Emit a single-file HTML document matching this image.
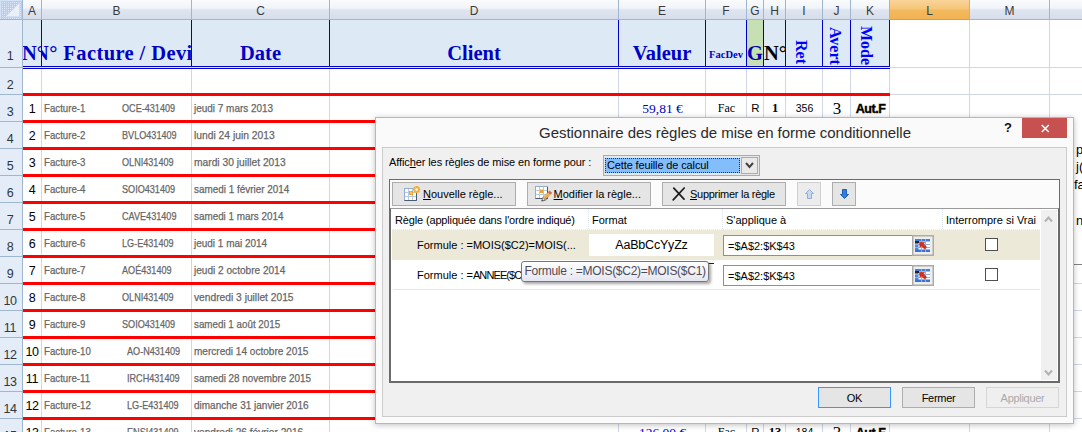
<!DOCTYPE html>
<html lang="fr"><head><meta charset="utf-8"><title>Gestionnaire des règles de mise en forme conditionnelle</title>
<style>
html,body{margin:0;padding:0;background:#fff;}
body{width:1082px;height:432px;overflow:hidden;position:relative;font-family:"Liberation Sans",sans-serif;}
#sheet{position:absolute;left:0;top:0;width:1082px;height:432px;overflow:hidden;background:#fff;}
.abs,.ch,.rh,.gv,.gh,.red,.t,.n,.nar,.hc,.bl{position:absolute;}
.ch{top:0;height:19px;border-bottom:1px solid #9eb6ce;border-right:1px solid #9eb6ce;background:linear-gradient(#f9fbfd 0%,#f1f4f9 42%,#dfe5f0 52%,#d7deeb 100%);color:#3b3b3b;font-size:12px;line-height:22px;text-align:center;box-sizing:content-box;}
.ch.sel{background:linear-gradient(#f9d49a 0%,#f6c67a 45%,#f3b95e 55%,#f2b352 100%);border-bottom-color:#f29536;border-right-color:#f2a84a;color:#3b3b3b;}
.rh{left:0;width:22px;border-right:1px solid #9eb6ce;border-bottom:1px solid #9eb6ce;background:#e4ecf7;color:#2c3744;font-size:12.5px;letter-spacing:-0.35px;text-align:center;}
.rh span{position:absolute;left:-2px;right:0;bottom:1px;line-height:15px;}
.gv{top:20px;width:1px;height:412px;background:#d0d7e5;}
.gh{left:23px;height:1px;width:1059px;background:#d0d7e5;}
.red{left:23px;width:867px;height:3px;background:#fe0000;}
.n{font-size:12.5px;color:#000;text-align:center;left:23px;width:18px;line-height:15px;letter-spacing:-0.35px;}
.nar{font-size:11px;color:#666;white-space:nowrap;transform-origin:0 0;transform:scaleX(0.88);line-height:13px;-webkit-text-stroke:0.25px #666;}
.nar.nc{transform:scaleX(0.827);}
.nar.nd{transform:scaleX(0.905);}
.hc{top:20px;height:46px;background:#dde9f5;overflow:hidden;}
.bl{background:#0000c8;}
.ht{position:absolute;white-space:nowrap;font-family:"Liberation Serif",serif;font-weight:bold;color:#0000c8;}
.t{white-space:nowrap;}
/* dialog */
#dlg{position:absolute;left:375px;top:117px;width:697px;height:305px;border:1px solid #b3b3b3;background:#f4f4f4;box-shadow:0 0 5px rgba(0,0,0,0.18);font-size:11px;color:#000;}
#client{position:absolute;left:6px;top:29px;width:684px;height:269px;background:#f0f0f0;border:1px solid #dcdcdc;box-sizing:border-box;}
.btn{position:absolute;box-sizing:border-box;border:1px solid #adadad;background:#e5e5e5;height:24px;top:182px;font-size:11px;white-space:nowrap;}
.btn span.l{position:absolute;top:4px;line-height:14px;}
.fld{position:absolute;left:723px;width:211px;height:21px;box-sizing:border-box;border:1px solid #8f8f8f;background:#fff;}
.fld span{position:absolute;left:4px;top:3px;font-size:11px;line-height:14px;}
.cb{position:absolute;left:985px;width:13px;height:13px;box-sizing:border-box;border:1px solid #4f4f4f;background:#fff;}
.d{position:absolute;}
</style></head><body>
<div id="sheet">

<div class="abs" style="left:23px;top:20px;width:866px;height:47px;background:#dde9f5"></div>
<div class="abs" style="left:747px;top:20px;width:16px;height:47px;background:#c6e0b4"></div>
<div class="gv" style="left:41px"></div>
<div class="gv" style="left:191px"></div>
<div class="gv" style="left:329px"></div>
<div class="gv" style="left:618px"></div>
<div class="gv" style="left:705px"></div>
<div class="gv" style="left:746px"></div>
<div class="gv" style="left:763px"></div>
<div class="gv" style="left:785px"></div>
<div class="gv" style="left:822px"></div>
<div class="gv" style="left:850px"></div>
<div class="gv" style="left:889px"></div>
<div class="gv" style="left:969px"></div>
<div class="gv" style="left:1049px"></div>
<div class="gv" style="left:1130px"></div>
<div class="gh" style="top:67px"></div>
<div class="gh" style="top:94px"></div>
<div class="gh" style="top:121px"></div>
<div class="gh" style="top:148px"></div>
<div class="gh" style="top:175px"></div>
<div class="gh" style="top:202px"></div>
<div class="gh" style="top:229px"></div>
<div class="gh" style="top:256px"></div>
<div class="gh" style="top:283px"></div>
<div class="gh" style="top:310px"></div>
<div class="gh" style="top:337px"></div>
<div class="gh" style="top:364px"></div>
<div class="gh" style="top:391px"></div>
<div class="gh" style="top:418px"></div>
<div class="gh" style="top:445px"></div>
<div class="abs" style="left:1074px;top:117px;width:8px;height:147px;background:#fff;border-bottom:1px solid #808080"></div>
<div class="ch" style="left:0;width:22px;background:#b9d1f3"><svg width="22" height="19" style="position:absolute;left:0;top:0"><defs><pattern id="dots" width="2" height="2" patternUnits="userSpaceOnUse"><rect width="2" height="2" fill="#b4cef4"/><rect width="1" height="1" fill="#dbe7f9"/></pattern></defs><rect x="0" y="0" width="22" height="19" fill="url(#dots)"/><path d="M0.5 19 V0.5 H22" fill="none" stroke="#d3e2f8"/><path d="M19 3.5 L19 16.5 L6 16.5 Z" fill="#e9f0fa"/><path d="M19.5 3 L19.5 17 L5 17" fill="none" stroke="#c9dbf5" stroke-width="1"/></svg></div>
<div class="ch" style="left:23px;width:18px">A</div>
<div class="ch" style="left:42px;width:149px">B</div>
<div class="ch" style="left:192px;width:137px">C</div>
<div class="ch" style="left:330px;width:288px">D</div>
<div class="ch" style="left:619px;width:86px">E</div>
<div class="ch" style="left:706px;width:40px">F</div>
<div class="ch" style="left:747px;width:16px">G</div>
<div class="ch" style="left:764px;width:21px">H</div>
<div class="ch" style="left:786px;width:36px">I</div>
<div class="ch" style="left:823px;width:27px">J</div>
<div class="ch" style="left:851px;width:38px">K</div>
<div class="ch sel" style="left:890px;width:79px">L</div>
<div class="ch" style="left:970px;width:79px">M</div>
<div class="ch" style="left:1050px;width:80px">N</div>
<div class="rh" style="top:20px;height:47px"><span style="bottom:3px">1</span></div>
<div class="rh" style="top:68px;height:26px"><span>2</span></div>
<div class="rh" style="top:95px;height:26px"><span>3</span></div>
<div class="rh" style="top:122px;height:26px"><span>4</span></div>
<div class="rh" style="top:149px;height:26px"><span>5</span></div>
<div class="rh" style="top:176px;height:26px"><span>6</span></div>
<div class="rh" style="top:203px;height:26px"><span>7</span></div>
<div class="rh" style="top:230px;height:26px"><span>8</span></div>
<div class="rh" style="top:257px;height:26px"><span>9</span></div>
<div class="rh" style="top:284px;height:26px"><span>10</span></div>
<div class="rh" style="top:311px;height:26px"><span>11</span></div>
<div class="rh" style="top:338px;height:26px"><span>12</span></div>
<div class="rh" style="top:365px;height:26px"><span>13</span></div>
<div class="rh" style="top:392px;height:26px"><span>14</span></div>
<div class="rh" style="top:419px;height:26px"><span>15</span></div>
<div class="rh" style="top:446px;height:26px"><span>15</span></div>
<div class="bl" style="left:41px;top:20px;width:1px;height:47px"></div>
<div class="bl" style="left:191px;top:20px;width:1px;height:47px"></div>
<div class="bl" style="left:329px;top:20px;width:1px;height:47px"></div>
<div class="bl" style="left:618px;top:20px;width:1px;height:47px"></div>
<div class="bl" style="left:705px;top:20px;width:1px;height:47px"></div>
<div class="bl" style="left:746px;top:20px;width:1px;height:47px"></div>
<div class="bl" style="left:763px;top:20px;width:1px;height:47px"></div>
<div class="bl" style="left:785px;top:20px;width:1px;height:47px"></div>
<div class="bl" style="left:822px;top:20px;width:1px;height:47px"></div>
<div class="bl" style="left:850px;top:20px;width:1px;height:47px"></div>
<div class="bl" style="left:889px;top:20px;width:1px;height:47px"></div>
<div class="bl" style="left:23px;top:66px;width:867px;height:1px"></div>
<div class="bl" style="left:23px;top:68px;width:867px;height:1px"></div>
<div class="abs" style="left:23px;top:67px;width:867px;height:1px;background:#dde9f5"></div>
<div class="abs" style="left:23px;top:20px;width:18px;height:46px;overflow:hidden"><span class="ht" style="font-size:20.5px;left:-1px;top:21px;line-height:24px">N°</span></div>
<div class="abs" style="left:42px;top:20px;width:149px;height:46px;overflow:hidden"><span class="ht" style="font-size:20.5px;left:-8px;top:21px;line-height:24px;letter-spacing:0.4px">N° Facture / Devis</span></div>
<div class="abs" style="left:192px;top:20px;width:137px;height:46px;overflow:hidden"><span class="ht" style="font-size:20.5px;left:0;width:137px;text-align:center;top:21px;line-height:24px">Date</span></div>
<div class="abs" style="left:330px;top:20px;width:288px;height:46px;overflow:hidden"><span class="ht" style="font-size:20.5px;left:0;width:288px;text-align:center;top:21px;line-height:24px">Client</span></div>
<div class="abs" style="left:619px;top:20px;width:86px;height:46px;overflow:hidden"><span class="ht" style="font-size:20.5px;left:0;width:86px;text-align:center;top:21px;line-height:24px">Valeur</span></div>
<div class="abs" style="left:706px;top:20px;width:40px;height:46px;overflow:hidden"><span class="ht" style="font-size:10.5px;left:0;width:40px;text-align:center;top:29px;line-height:12px">FacDev</span></div>
<div class="abs" style="left:747px;top:20px;width:16px;height:46px;overflow:hidden"><span class="ht" style="font-size:20.5px;left:0;width:16px;text-align:center;top:21px;line-height:24px;color:#0000b0">G</span></div>
<div class="abs" style="left:764px;top:20px;width:21px;height:46px;overflow:hidden"><span class="ht" style="font-size:20.5px;left:0px;top:21px;line-height:24px;color:#000">N°</span></div>
<div class="abs" style="left:786px;top:20px;width:36px;height:46px;overflow:hidden"><span class="ht" style="color:#0000ff;font-size:16px;line-height:16px;left:14.5px;top:20px;transform-origin:0 0;transform:rotate(90deg) translateY(-50%)">Ret</span></div>
<div class="abs" style="left:823px;top:20px;width:27px;height:46px;overflow:hidden"><span class="ht" style="color:#0000ff;font-size:16px;line-height:16px;left:11.5px;top:7.399999999999999px;transform-origin:0 0;transform:rotate(90deg) translateY(-50%)">Avert</span></div>
<div class="abs" style="left:851px;top:20px;width:38px;height:46px;overflow:hidden"><span class="ht" style="color:#0000ff;font-size:16px;line-height:16px;left:15.299999999999955px;top:6px;transform-origin:0 0;transform:rotate(90deg) translateY(-50%)">Mode</span></div>
<div class="red" style="top:93px"></div>
<div class="red" style="top:120px"></div>
<div class="red" style="top:147px"></div>
<div class="red" style="top:174px"></div>
<div class="red" style="top:201px"></div>
<div class="red" style="top:228px"></div>
<div class="red" style="top:255px"></div>
<div class="red" style="top:282px"></div>
<div class="red" style="top:309px"></div>
<div class="red" style="top:336px"></div>
<div class="red" style="top:363px"></div>
<div class="red" style="top:390px"></div>
<div class="red" style="top:417px"></div>
<div class="n" style="top:102px">1</div>
<div class="nar" style="left:44px;top:102px">Facture-1</div>
<div class="nar nc" style="left:122px;top:102px">OCE-431409</div>
<div class="nar" style="left:194px;top:102px;transform:scaleX(0.905)">jeudi 7 mars 2013</div>
<div class="n" style="top:129px">2</div>
<div class="nar" style="left:44px;top:129px">Facture-2</div>
<div class="nar nc" style="left:122px;top:129px">BVLO431409</div>
<div class="nar" style="left:194px;top:129px;transform:scaleX(0.9351)">lundi 24 juin 2013</div>
<div class="n" style="top:156px">3</div>
<div class="nar" style="left:44px;top:156px">Facture-3</div>
<div class="nar nc" style="left:122px;top:156px">OLNI431409</div>
<div class="nar" style="left:194px;top:156px;transform:scaleX(0.9314)">mardi 30 juillet 2013</div>
<div class="n" style="top:183px">4</div>
<div class="nar" style="left:44px;top:183px">Facture-4</div>
<div class="nar nc" style="left:122px;top:183px">SOIO431409</div>
<div class="nar" style="left:194px;top:183px;transform:scaleX(0.9012)">samedi 1 février 2014</div>
<div class="n" style="top:210px">5</div>
<div class="nar" style="left:44px;top:210px">Facture-5</div>
<div class="nar nc" style="left:122px;top:210px">CAVE431409</div>
<div class="nar" style="left:194px;top:210px;transform:scaleX(0.897)">samedi 1 mars 2014</div>
<div class="n" style="top:237px">6</div>
<div class="nar" style="left:44px;top:237px">Facture-6</div>
<div class="nar nc" style="left:122px;top:237px">LG-E431409</div>
<div class="nar" style="left:194px;top:237px;transform:scaleX(0.9062)">jeudi 1 mai 2014</div>
<div class="n" style="top:264px">7</div>
<div class="nar" style="left:44px;top:264px">Facture-7</div>
<div class="nar nc" style="left:122px;top:264px">AOÉ431409</div>
<div class="nar" style="left:194px;top:264px;transform:scaleX(0.916)">jeudi 2 octobre 2014</div>
<div class="n" style="top:291px">8</div>
<div class="nar" style="left:44px;top:291px">Facture-8</div>
<div class="nar nc" style="left:122px;top:291px">OLNI431409</div>
<div class="nar" style="left:194px;top:291px;transform:scaleX(0.9302)">vendredi 3 juillet 2015</div>
<div class="n" style="top:318px">9</div>
<div class="nar" style="left:44px;top:318px">Facture-9</div>
<div class="nar nc" style="left:122px;top:318px">SOIO431409</div>
<div class="nar" style="left:194px;top:318px;transform:scaleX(0.8916)">samedi 1 août 2015</div>
<div class="n" style="top:345px">10</div>
<div class="nar" style="left:44px;top:345px">Facture-10</div>
<div class="nar nc" style="left:127px;top:345px">AO-N431409</div>
<div class="nar" style="left:194px;top:345px;transform:scaleX(0.913)">mercredi 14 octobre 2015</div>
<div class="n" style="top:372px">11</div>
<div class="nar" style="left:44px;top:372px">Facture-11</div>
<div class="nar nc" style="left:127px;top:372px">IRCH431409</div>
<div class="nar" style="left:194px;top:372px;transform:scaleX(0.8973)">samedi 28 novembre 2015</div>
<div class="n" style="top:399px">12</div>
<div class="nar" style="left:44px;top:399px">Facture-12</div>
<div class="nar nc" style="left:127px;top:399px">LG-E431409</div>
<div class="nar" style="left:194px;top:399px;transform:scaleX(0.909)">dimanche 31 janvier 2016</div>
<div class="n" style="top:426px">13</div>
<div class="nar" style="left:44px;top:426px">Facture-13</div>
<div class="nar nc" style="left:127px;top:426px">ENSI431409</div>
<div class="nar" style="left:194px;top:426px;transform:scaleX(0.9202)">vendredi 26 février 2016</div>
<div class="t" style="position:absolute;left:619px;width:87px;text-align:center;top:101px;font-family:'Liberation Serif',serif;font-size:13.5px;line-height:16px;color:#0000c8">59,81 €</div>
<div class="t" style="position:absolute;left:706px;width:41px;text-align:center;top:101px;font-family:'Liberation Serif',serif;font-size:12px;line-height:14px;color:#000">Fac</div>
<div class="t" style="position:absolute;left:747px;width:17px;text-align:center;top:101px;font-size:11.5px;line-height:15px;color:#000">R</div>
<div class="t" style="position:absolute;left:764px;width:22px;text-align:center;top:100.5px;font-family:'Liberation Serif',serif;font-weight:bold;font-size:12.5px;line-height:14px;color:#000">1</div>
<div class="t" style="position:absolute;left:786px;width:37px;text-align:center;top:102px;font-size:10.5px;line-height:13px;color:#000">356</div>
<div class="t" style="position:absolute;left:823px;width:28px;text-align:center;top:98.5px;font-family:'Liberation Serif',serif;font-size:17px;line-height:20px;color:#000">3</div>
<div class="t" style="position:absolute;left:851px;width:39px;text-align:center;top:101.5px;font-weight:bold;font-size:12.5px;line-height:14px;letter-spacing:-0.45px;color:#000;-webkit-text-stroke:0.4px #000">Aut.F</div>
<div class="t" style="position:absolute;left:619px;width:87px;text-align:center;top:425px;font-family:'Liberation Serif',serif;font-size:13.5px;line-height:16px;color:#0000c8">126,00 €</div>
<div class="t" style="position:absolute;left:706px;width:41px;text-align:center;top:425px;font-family:'Liberation Serif',serif;font-size:12px;line-height:14px;color:#000">Fac</div>
<div class="t" style="position:absolute;left:747px;width:17px;text-align:center;top:425px;font-size:11.5px;line-height:15px;color:#000">R</div>
<div class="t" style="position:absolute;left:764px;width:22px;text-align:center;top:424.5px;font-family:'Liberation Serif',serif;font-weight:bold;font-size:12.5px;line-height:14px;color:#000">13</div>
<div class="t" style="position:absolute;left:786px;width:37px;text-align:center;top:426px;font-size:10.5px;line-height:13px;color:#000">184</div>
<div class="t" style="position:absolute;left:823px;width:28px;text-align:center;top:422.5px;font-family:'Liberation Serif',serif;font-size:17px;line-height:20px;color:#000">3</div>
<div class="t" style="position:absolute;left:851px;width:39px;text-align:center;top:425.5px;font-weight:bold;font-size:12.5px;line-height:14px;letter-spacing:-0.45px;color:#000;-webkit-text-stroke:0.4px #000">Aut.F</div>
<div class="t" style="position:absolute;left:1076px;top:141.5px;font-size:13px;line-height:15px;color:#000">p</div>
<div class="t" style="position:absolute;left:1076px;top:158.5px;font-size:13px;line-height:15px;color:#000">j(</div>
<div class="t" style="position:absolute;left:1074px;top:177px;font-size:13px;line-height:15px;color:#000">fa</div>
<div class="t" style="position:absolute;left:1076px;top:213px;font-size:13px;line-height:15px;color:#000">n</div>
</div><!-- dialog -->
<div id="dlgwrap" style="position:absolute;left:0;top:0;width:1082px;height:432px;font-family:'Liberation Sans',sans-serif;">
<div class="d" style="left:375px;top:117px;width:699px;height:307px;box-sizing:border-box;border:1px solid #b7b7b7;background:#fafafa;box-shadow:0 1px 6px rgba(0,0,0,0.25)"></div>
<div class="d" style="left:382px;top:147px;width:685px;height:270px;box-sizing:border-box;border:1px solid #cbcbcb;background:#f0f0f0"></div>
<!-- title -->
<div class="d t" style="left:382px;width:686px;top:123px;text-align:center;font-size:15px;line-height:20px;color:#2b2b2b;letter-spacing:-0.045px" id="title">Gestionnaire des règles de mise en forme conditionnelle</div>
<div class="d t" style="left:1002px;top:119px;width:12px;text-align:center;font-size:13px;font-weight:bold;line-height:18px;color:#111">?</div>
<div class="d" style="left:1022px;top:118px;width:45px;height:20px;background:#c75050"></div>
<svg class="d" style="left:1041px;top:124px" width="9" height="9" viewBox="0 0 9 9"><path d="M0.8 1 L7.8 8 M7.8 1 L0.8 8" stroke="#fff" stroke-width="1.5" fill="none"/></svg>
<!-- label + combo -->
<div class="d t" style="left:389px;top:155px;font-size:11px;line-height:14px;color:#000;letter-spacing:-0.1px" id="lbl">Affic<u>h</u>er les règles de mise en forme pour :</div>
<div class="d" style="left:603px;top:155px;width:157px;height:21px;box-sizing:border-box;border:1px solid #acacac;background:#e6e6e6"></div>
<div class="d" style="left:605px;top:158px;width:135px;height:15px;box-sizing:border-box;background:#84bdfb;border:1px dotted #3a3020"></div>
<div class="d t" style="left:607px;top:158px;font-size:11px;line-height:15px;color:#000;letter-spacing:-0.13px" id="combo">Cette feuille de calcul</div>
<div class="d" style="left:741px;top:157px;width:17px;height:17px;box-sizing:border-box;border:1px solid #acacac;background:#e9e9e9"></div>
<svg class="d" style="left:745px;top:162px" width="9" height="7" viewBox="0 0 9 7"><path d="M1 1 L4.5 5 L8 1" stroke="#404040" stroke-width="1.9" fill="none"/></svg>
<!-- outer list frame -->
<div class="d" style="left:389px;top:179px;width:671px;height:204px;box-sizing:border-box;border:1px solid #6b6b6b;background:#fbfbfb"></div>
<!-- buttons -->
<div class="btn" style="left:392px;width:124px"><svg class="d" style="left:11px;top:3px" width="17" height="16" viewBox="0 0 17 16"><rect x="0.5" y="2.5" width="12" height="12" fill="#fff" stroke="#93add0"/><path d="M1 6.5h11M1 10.5h11M4.5 3v11M8.5 3v11" stroke="#b9cbe3" fill="none"/><path d="M12.5 3 V14.5 H0.5" stroke="#4a5b6e" fill="none"/><rect x="5" y="5" width="4" height="4" fill="#f2a336"/><rect x="6" y="6" width="2" height="2" fill="#f7c46a"/><circle cx="12.6" cy="3.6" r="3.5" fill="#f7b84e"/><path d="M12.6 0v7.2M9 3.6h7.2M10 1l5.2 5.2M15.2 1L10 6.2" stroke="#f3a32c" stroke-width="0.9" fill="none"/><circle cx="12.6" cy="3.6" r="1.4" fill="#fffbe8"/></svg><span class="l" style="left:30px"><u>N</u>ouvelle règle...</span></div>
<div class="btn" style="left:527px;width:124px"><svg class="d" style="left:7px;top:3px" width="18" height="16" viewBox="0 0 18 16"><rect x="0.5" y="0.5" width="12" height="12" fill="#fff" stroke="#93add0"/><path d="M1 4.5h11M1 8.5h11M4.5 1v11M8.5 1v11" stroke="#b9cbe3" fill="none"/><path d="M12.5 1 V12.5 H0.5" stroke="#4a5b6e" fill="none"/><rect x="5" y="3.5" width="3.5" height="3.5" fill="#f2a336"/><path d="M8 11.5 L13.5 6 L15.6 8.1 L10.1 13.6 Z" fill="#f6c566" stroke="#a8722a" stroke-width="0.6"/><path d="M9.2 12.6 L14.6 7.2" stroke="#e2992e" stroke-width="0.9"/><path d="M13.5 6 L14.6 4.9 L16.7 7 L15.6 8.1 Z" fill="#e4605a" stroke="#a83a36" stroke-width="0.5"/><path d="M8 11.5 L10.1 13.6 L6.6 14.9 Z" fill="#fff" stroke="#555" stroke-width="0.6"/><path d="M7.3 13.6 L8 14.3 L6.6 14.9 Z" fill="#222"/><path d="M6.8 15.2 L10.6 14.2 L12.5 12.3" stroke="#3a3a3a" stroke-width="0.8" fill="none" opacity="0.7"/></svg><span class="l" style="left:25.5px"><u>M</u>odifier la règle...</span></div>
<div class="btn" style="left:662px;width:124px"><svg class="d" style="left:9px;top:4px" width="14" height="14" viewBox="0 0 14 14"><path d="M1.8 1.2 L12 12.2 M12.2 1 L1.2 12.8" stroke="#1c1c1c" stroke-width="1.7" stroke-linecap="round" fill="none"/></svg><span class="l" style="left:27px;letter-spacing:-0.28px"><u>S</u>upprimer la règle</span></div>
<div class="btn" style="left:797px;width:24px;border-color:#d0d0d0;background:#ececec"><svg class="d" style="left:7px;top:6px" width="9" height="10" viewBox="0 0 9 10"><path d="M4.5 0.5 L8.5 4.5 L6.5 4.5 L6.5 9.5 L2.5 9.5 L2.5 4.5 L0.5 4.5 Z" fill="#c9d9ee" stroke="#93aed6"/></svg></div>
<div class="btn" style="left:832px;width:24px"><svg class="d" style="left:7px;top:6px" width="9" height="10" viewBox="0 0 9 10"><path d="M4.5 9.5 L8.5 5.5 L6.5 5.5 L6.5 0.5 L2.5 0.5 L2.5 5.5 L0.5 5.5 Z" fill="#2f7fe0" stroke="#1d5fb8"/></svg></div>
<!-- inner list -->
<div class="d" style="left:390px;top:208px;width:669px;height:174px;box-sizing:border-box;border:1px solid #6b6b6b;border-top-color:#9a9a9a;background:#fff"></div>
<div class="d" style="left:392px;top:230px;width:648px;height:30px;background:#ece9d8"></div>
<div class="d" style="left:393px;top:289px;width:647px;height:1px;background:#e6e6e6"></div>
<!-- header texts -->
<div class="d t" style="left:395px;top:213px;font-size:11px;line-height:14px;letter-spacing:-0.15px" id="h1">Règle (appliquée dans l'ordre indiqué)</div>
<div class="d t" style="left:592px;top:213px;font-size:11px;line-height:14px">Format</div>
<div class="d t" style="left:726px;top:213px;font-size:11px;line-height:14px">S'applique à</div>
<div class="d t" style="left:946px;top:213px;font-size:11px;line-height:14px" id="h4">Interrompre si Vrai</div>
<div class="d" style="left:588px;top:209px;width:0;height:20px;border-left:1px dotted #dbe4f0"></div>
<div class="d" style="left:722px;top:209px;width:0;height:20px;border-left:1px dotted #dbe4f0"></div>
<div class="d" style="left:942px;top:209px;width:0;height:20px;border-left:1px dotted #dbe4f0"></div>
<div class="d" style="left:392px;top:229px;width:648px;height:0;border-top:1px dotted #e3ecf8"></div>
<!-- scrollbar -->
<div class="d" style="left:1041px;top:210px;width:16px;height:170px;background:#f0f0f0"></div>
<svg class="d" style="left:1044px;top:215px" width="9" height="8" viewBox="0 0 9 8"><path d="M1 6.5 L4.5 2.5 L8 6.5" stroke="#b2b2b2" stroke-width="2" fill="none"/></svg>
<svg class="d" style="left:1044px;top:369px" width="9" height="8" viewBox="0 0 9 8"><path d="M1 1.5 L4.5 5.5 L8 1.5" stroke="#b2b2b2" stroke-width="2" fill="none"/></svg>
<!-- rows -->
<div class="d t" style="left:417px;top:238px;font-size:11px;line-height:14px" id="r1">Formule : =MOIS($C2)=MOIS(...</div>
<div class="d t" style="left:417px;top:268px;font-size:11px;line-height:14px">Formule : =<span style="letter-spacing:-0.9px">ANNEE($C2)=ANNEE(...</span></div>
<div class="d" style="left:589px;top:234px;width:125px;height:22px;background:#fff"></div>
<div class="d t" style="left:589px;width:125px;top:236px;text-align:center;font-size:12.5px;line-height:18px;color:#000;letter-spacing:-0.2px" id="prev">AaBbCcYyZz</div>
<div class="d" style="left:589px;top:263px;width:125px;height:1px;background:#222"></div>
<div class="d t" style="left:589px;width:125px;top:266px;text-align:center;font-size:12.5px;line-height:18px;color:#000;letter-spacing:-0.2px">AaBbCcYyZz</div>
<div class="fld" style="top:235px"><span>=$A$2:$K$43</span></div>
<div class="fld" style="top:265px"><span>=$A$2:$K$43</span></div>
<!-- range buttons -->
<svg class="d" style="left:912px;top:235px" width="22" height="21" viewBox="0 0 22 21"><rect x="0" y="0" width="22" height="21" fill="#ababab"/><rect x="1.5" y="1.5" width="19" height="18" fill="#eeeeee"/><rect x="3" y="4" width="15" height="13" fill="#fff"/><rect x="3" y="4" width="15" height="2.5" fill="#3f7fd6"/><rect x="3" y="6.5" width="3.5" height="10.5" fill="#4c8be0"/><rect x="3" y="14.5" width="15" height="2.5" fill="#3a74cf"/><path d="M3 9.5h15M3 12.5h15M9.5 4v13M13.5 4v13" stroke="#8fb3e8" stroke-width="1" fill="none"/><rect x="3" y="6" width="4" height="2" fill="#222"/><path d="M7.5 7.2 L12.6 7.6 L11.4 8.9 L14.6 12.2 L12.6 14.1 L9.4 10.8 L8 12.3 Z" fill="#dd2b1c" stroke="#a01208" stroke-width="0.5"/></svg>
<svg class="d" style="left:912px;top:265px" width="22" height="21" viewBox="0 0 22 21"><rect x="0" y="0" width="22" height="21" fill="#ababab"/><rect x="1.5" y="1.5" width="19" height="18" fill="#eeeeee"/><rect x="3" y="4" width="15" height="13" fill="#fff"/><rect x="3" y="4" width="15" height="2.5" fill="#3f7fd6"/><rect x="3" y="6.5" width="3.5" height="10.5" fill="#4c8be0"/><rect x="3" y="14.5" width="15" height="2.5" fill="#3a74cf"/><path d="M3 9.5h15M3 12.5h15M9.5 4v13M13.5 4v13" stroke="#8fb3e8" stroke-width="1" fill="none"/><rect x="3" y="6" width="4" height="2" fill="#222"/><path d="M7.5 7.2 L12.6 7.6 L11.4 8.9 L14.6 12.2 L12.6 14.1 L9.4 10.8 L8 12.3 Z" fill="#dd2b1c" stroke="#a01208" stroke-width="0.5"/></svg>
<div class="cb" style="top:238px"></div>
<div class="cb" style="top:268px"></div>
<!-- tooltip -->
<div class="d" style="left:521px;top:261px;width:188px;height:21px;box-sizing:border-box;border:1px solid #767676;border-radius:3px;background:linear-gradient(#ffffff,#e4e5f0);box-shadow:2px 2px 3px rgba(0,0,0,0.35)"></div>
<div class="d t" style="left:524.5px;top:264px;font-size:12px;line-height:15px;color:#4b4b58;letter-spacing:-0.27px" id="tip">Formule : =MOIS($C2)=MOIS($C1)</div>
<!-- bottom buttons -->
<div class="btn" style="left:818px;top:387px;width:73px;height:21px;border-color:#3399ff;text-align:center;line-height:21px;font-size:11px;letter-spacing:-0.3px">OK</div>
<div class="btn" style="left:902px;top:387px;width:73px;height:21px;text-align:center;line-height:21px;font-size:11px;letter-spacing:-0.3px">Fermer</div>
<div class="btn" style="left:986px;top:387px;width:73px;height:21px;text-align:center;line-height:21px;font-size:11px;letter-spacing:-0.3px;color:#a9a9a9;border-color:#d5d5d5;background:#efefef">Appliquer</div>
</div>
</body></html>
